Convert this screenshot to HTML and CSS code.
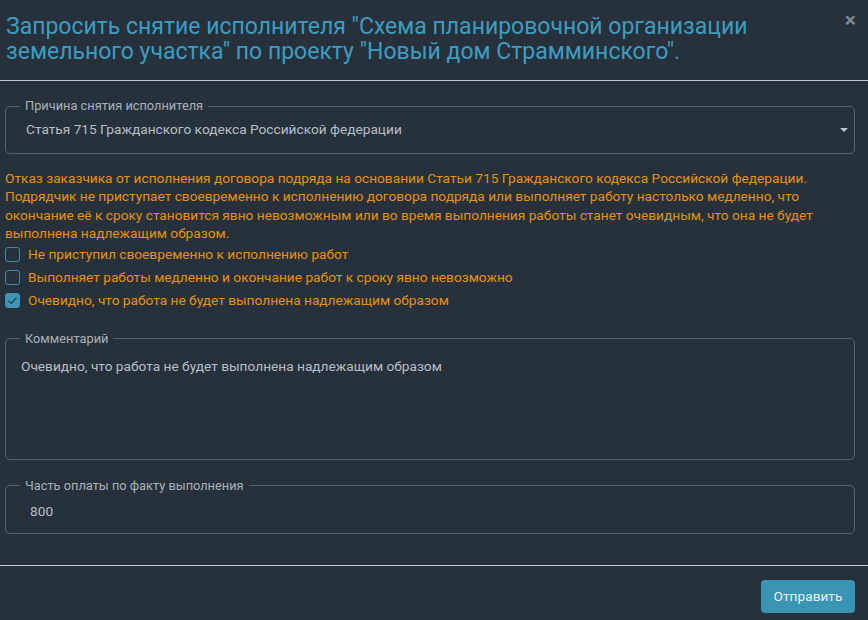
FILE: index.html
```html
<!DOCTYPE html>
<html lang="ru">
<head>
<meta charset="utf-8">
<link rel="stylesheet" href="styles.css">
</head>
<body>
<div class="modal">
  <div class="modal-header">
    <h1 class="title">Запросить снятие исполнителя "Схема планировочной организации земельного участка" по проекту "Новый дом Страмминского".</h1>
    <span class="close">&times;</span>
  </div>
  <div class="modal-body">
    <fieldset class="field field-select">
      <legend>Причина снятия исполнителя</legend>
      <div class="select">
        <span>Статья 715 Гражданского кодекса Российской федерации</span>
        <span class="caret"></span>
      </div>
    </fieldset>
    <p class="notice">Отказ заказчика от исполнения договора подряда на основании Статьи 715 Гражданского кодекса Российской федерации. Подрядчик не приступает своевременно к исполнению договора подряда или выполняет работу настолько медленно, что окончание её к сроку становится явно невозможным или во время выполнения работы станет очевидным, что она не будет выполнена надлежащим образом.</p>
    <div class="checks">
      <label class="check"><span class="box"></span>Не приступил своевременно к исполнению работ</label>
      <label class="check"><span class="box"></span>Выполняет работы медленно и окончание работ к сроку явно невозможно</label>
      <label class="check"><span class="box checked"><svg width="11" height="9" viewBox="0 0 11 9"><path d="M1.5 4.8 L4.2 7.3 L9.5 1.8" fill="none" stroke="#244a5c" stroke-width="1.4"/></svg></span>Очевидно, что работа не будет выполнена надлежащим образом</label>
    </div>
    <fieldset class="field field-comment">
      <legend>Комментарий</legend>
      <div class="textarea">Очевидно, что работа не будет выполнена надлежащим образом</div>
    </fieldset>
    <fieldset class="field field-amount">
      <legend>Часть оплаты по факту выполнения</legend>
      <div class="input">800</div>
    </fieldset>
  </div>
  <div class="modal-footer">
    <button class="btn">Отправить</button>
  </div>
</div>
</body>
</html>
```
FILE: styles.css
```css
html, body {
  margin: 0;
  padding: 0;
  background: #27313b;
  font-family: Roboto, "Noto Sans", sans-serif;
}
.modal {
  width: 868px;
  height: 620px;
  background: #27313b;
}
.modal-header {
  display: flex;
  justify-content: space-between;
  align-items: flex-start;
  padding: 14px 13px 0 6px;
  height: 66px;
  border-bottom: 1px solid #c4c8cc;
}
.title {
  margin: 0;
  font-size: 23px;
  line-height: 25px;
  font-weight: 400;
  color: #3d9cc1;
  max-width: 800px;
}
.close {
  color: #7c8995;
  font-size: 21px;
  font-weight: 700;
  line-height: 16px;
  margin-top: -2px;
  margin-right: -1px;
}
.modal-body {
  padding: 17px 13px 0 5px;
}
.field {
  margin: 0;
  border: 1px solid #56646f;
  border-radius: 5px;
  padding: 0 15px;
  min-width: 0;
}
.field legend {
  padding: 0 5px;
  margin-left: -1px;
  font-size: 12.8px;
  line-height: 16px;
  color: #a7b1ba;
}
.select {
  display: flex;
  justify-content: space-between;
  align-items: center;
  padding: 5px 0 14px 5px;
  font-size: 13.7px;
  line-height: 20px;
  color: #b6bfc7;
}
.caret {
  width: 0;
  height: 0;
  border-left: 4px solid transparent;
  border-right: 4px solid transparent;
  border-top: 4px solid #b8c3cb;
  margin-right: -9px;
  margin-top: 2px;
}
.notice {
  margin: 15px 0 0 0;
  font-size: 13.7px;
  line-height: 18.4px;
  color: #e59112;
}
.checks {
  display: flex;
  flex-direction: column;
  margin-bottom: 19px;
}
.check {
  display: flex;
  align-items: center;
  height: 23px;
  font-size: 13.7px;
  color: #e59112;
}
.box {
  box-sizing: border-box;
  width: 15px;
  height: 15px;
  border: 1.5px solid #3a8bac;
  border-radius: 3px;
  margin: 0 8px 0 0;
  display: flex;
  align-items: center;
  justify-content: center;
}
.box.checked {
  background: #3f95b8;
  border-color: #3f95b8;
}
.field-comment {
  padding: 0 15px 13px 15px;
}
.textarea {
  height: 90px;
  margin-top: 9px;
  font-size: 13.7px;
  line-height: 20px;
  color: #b6bfc7;
}
.field-amount {
  margin-top: 18px;
  padding: 0 15px 12px 15px;
}
.input {
  margin-top: 7px;
  padding-left: 9px;
  font-size: 13.7px;
  line-height: 20px;
  color: #b6bfc7;
}
.modal-footer {
  margin-top: 31px;
  border-top: 1px solid #c4c8cc;
  display: flex;
  justify-content: flex-end;
  padding: 14px 13px 0 0;
}
.btn {
  width: 94px;
  height: 33px;
  border: none;
  border-radius: 4px;
  background: #3a94b3;
  color: #e6f3f8;
  font-family: Roboto, "Noto Sans", sans-serif;
  font-size: 13.7px;
  padding: 0;
}
```
